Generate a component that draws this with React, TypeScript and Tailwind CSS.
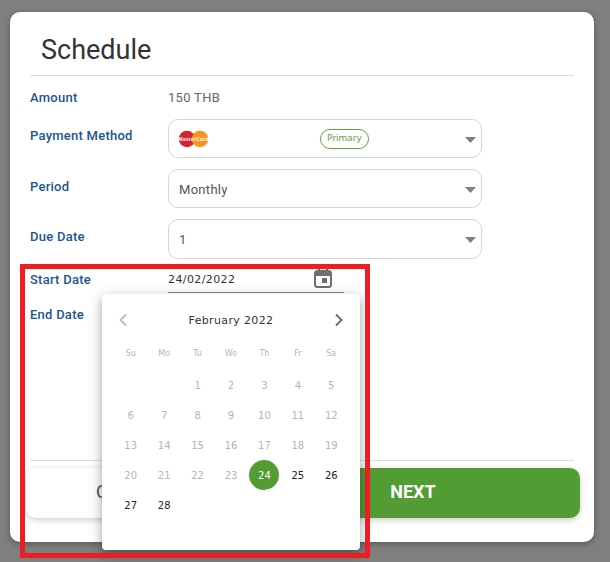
const techno = "font-['DejaVu_Sans',sans-serif]";

function Caret() {
  return (
    <svg width="11" height="6" viewBox="0 0 11 6" className="absolute right-[5px] top-[17px]">
      <path d="M0 0h11L5.5 6z" fill="#808080" />
    </svg>
  );
}

function SelectBox({ children }: { children: React.ReactNode }) {
  return (
    <div className="relative flex h-[39px] w-[314px] items-center rounded-[10px] border border-[#d6d6d6] pl-[10px] text-[13px] tracking-[0.3px] text-[#555]">
      {children}
      <Caret />
    </div>
  );
}

function Row({ label, labelPad = "", className, children }: { label: string; labelPad?: string; className: string; children?: React.ReactNode }) {
  return (
    <div className={`flex ${className}`}>
      <div className={`w-[138px] text-[13px] font-medium leading-[16px] tracking-[0.25px] text-[#20558f] ${labelPad}`}>{label}</div>
      {children}
    </div>
  );
}

const weekdays = ["Su", "Mo", "Tu", "We", "Th", "Fr", "Sa"];
const blanks = [0, 1];
const days = Array.from({ length: 28 }, (_, i) => i + 1);

function Calendar() {
  return (
    <div className={`absolute left-[92px] top-[282px] h-[256px] w-[258px] rounded-[4px] bg-white px-[12px] pt-[14px] shadow-[0_5px_10px_rgba(0,0,0,0.25),0_2px_16px_rgba(0,0,0,0.15)] ${techno}`}>
      <div className="flex h-[24px] items-center justify-between">
        <svg width="10" height="14" viewBox="0 0 10 14" className="ml-[4px]">
          <path d="M8 1.5 2.5 7 8 12.5" fill="none" stroke="#bdbdbd" strokeWidth="1.8" />
        </svg>
        <div className="pt-[3px] text-[11px] tracking-[0.35px] text-[#333]">February 2022</div>
        <svg width="10" height="14" viewBox="0 0 10 14" className="mr-[4px]">
          <path d="M2 1.5 7.5 7 2 12.5" fill="none" stroke="#666" strokeWidth="1.8" />
        </svg>
      </div>
      <div className="mt-[7px] grid grid-cols-7 text-center text-[8px] text-[#b5b5b5]">
        {weekdays.map((d) => (
          <div key={d} className="flex h-[30px] items-center justify-center">{d}</div>
        ))}
      </div>
      <div className="mt-[1px] grid grid-cols-7 text-center text-[10px]">
        {blanks.map((b) => <div key={b} className="h-[30px]" />)}
        {days.map((d) => (
          <div key={d} className="flex h-[30px] items-center justify-center">
            {d === 24 ? (
              <span className="flex h-[30px] w-[30px] items-center justify-center rounded-full bg-[#539b33] font-medium text-white">24</span>
            ) : (
              <span className={d > 24 ? "text-[#222]" : "text-[#b5b5b5]"}>{d}</span>
            )}
          </div>
        ))}
      </div>
    </div>
  );
}

export default function App() {
  return (
    <div className="relative h-[562px] w-[610px] overflow-hidden bg-[#7f7f7f] pl-[10px] pt-[12px] font-['Roboto',sans-serif]">
      <div className="relative flex h-[530px] w-[584px] flex-col rounded-[10px] bg-white shadow-[0_2px_6px_rgba(0,0,0,0.3)]">
        <div className="mx-[20px] h-[64px] border-b border-[#dedede] pl-[11px] pt-[21px] text-[27px] font-normal leading-[34px] text-[#333]">Schedule</div>

        <div className="flex flex-1 flex-col px-[20px]">
          <Row label="Amount" className="mt-[14px] h-[16px] items-center">
            <span className="text-[13px] tracking-[0.3px] text-[#666]">150 THB</span>
          </Row>
          <Row label="Payment Method" labelPad="pt-[9px]" className="mt-[13px]">
            <SelectBox>
              <svg width="30" height="18" viewBox="0 0 30 18" className="-ml-[1px] shrink-0">
                <circle cx="9" cy="9" r="8.3" fill="#d4232f" />
                <circle cx="22" cy="9" r="8.3" fill="#f7941d" />
                <text x="15.5" y="10.5" textAnchor="middle" fontSize="5" fontWeight="700" fill="#fff" fontFamily="Liberation Sans">MasterCard</text>
              </svg>
              <span className={`ml-[112px] flex h-[20px] w-[49px] items-center justify-center rounded-full border border-[#5ba63c] text-[9px] tracking-normal text-[#5ba63c] ${techno}`}>Primary</span>
            </SelectBox>
          </Row>
          <Row label="Period" labelPad="pt-[10px]" className="mt-[11px]">
            <SelectBox><span className="pt-[2px]">Monthly</span></SelectBox>
          </Row>
          <Row label="Due Date" labelPad="pt-[10px]" className="mt-[11px]">
            <div className="[&>div]:h-[40px]"><SelectBox><span className="pt-[1px]">1</span></SelectBox></div>
          </Row>
          <Row label="Start Date" className="mt-[13px]">
            <div className={`relative -mt-[2px] h-[23px] w-[176px] border-b border-[#8a8a8a] text-[11px] leading-[20px] tracking-[0.4px] text-[#333] ${techno}`}>
              24/02/2022
              <svg width="18" height="20" viewBox="0 0 18 20" className="absolute left-[146px] top-[-2px]" fill="#6f6f6f">
                <rect x="4" y="0" width="2" height="4" />
                <rect x="12" y="0" width="2" height="4" />
                <rect x="1" y="3" width="16" height="16" rx="2.5" fill="none" stroke="#6f6f6f" strokeWidth="2" />
                <rect x="1" y="3" width="16" height="5" />
                <rect x="8" y="10" width="5" height="5" />
              </svg>
            </div>
          </Row>
          <Row label="End Date" className="mt-[14px]" />
          <div className="flex-1" />
          <div className="border-t border-[#dedede]" />
        </div>

        <div className="mb-[24px] ml-[16px] mr-[14px] mt-[7px] flex h-[50px] gap-[8px]">
          <button className="h-[50px] w-[212px] rounded-[10px] bg-white pb-[4px] pr-[4px] text-[18px] font-normal text-[#555] shadow-[0_2px_6px_rgba(0,0,0,0.2)]">CANCEL</button>
          <button className="h-[50px] flex-1 rounded-[10px] bg-[#539b33] pb-[4px] text-[18px] font-bold text-white shadow-[0_2px_6px_rgba(0,0,0,0.2)]">NEXT</button>
        </div>

        <Calendar />
      </div>
      <div className="pointer-events-none absolute left-[20px] top-[264px] h-[294px] w-[350px] border-[5px] border-[#ee1c25]" />
    </div>
  );
}
